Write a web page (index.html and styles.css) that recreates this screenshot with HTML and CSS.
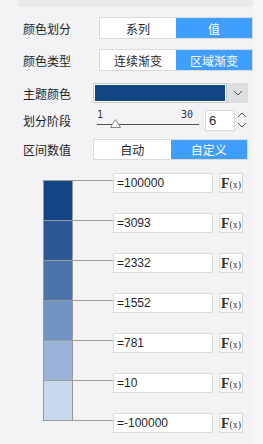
FILE: index.html
```html
<!DOCTYPE html>
<html lang="zh-CN">
<head>
  <meta charset="UTF-8">
  <meta name="viewport" content="width=device-width, initial-scale=1.0">
  <title>颜色设置</title>
  <link rel="stylesheet" href="styles.css">
</head>
<body>
  <div class="panel">
    <div class="section-title">颜色</div>

    <!-- 颜色划分 / 颜色类型 -->
    <div class="row row-wide r1">
      <span class="label">颜色划分</span>
      <div class="seg">
        <span class="seg-item">系列</span>
        <span class="seg-item active">值</span>
      </div>
    </div>
    <div class="row row-wide r2">
      <span class="label">颜色类型</span>
      <div class="seg">
        <span class="seg-item">连续渐变</span>
        <span class="seg-item active">区域渐变</span>
      </div>
    </div>

    <!-- 主题颜色 -->
    <div class="row r3">
      <span class="label">主题颜色</span>
      <div class="color-pick">
        <div class="swatch"></div>
        <div class="drop">
          <svg width="10" height="6" viewBox="0 0 10 6"><path d="M1 1 L5 5 L9 1" fill="none" stroke="#555" stroke-width="1"/></svg>
        </div>
      </div>
    </div>

    <!-- 划分阶段 -->
    <div class="row r4">
      <span class="label">划分阶段</span>
      <div class="slider">
        <div class="slider-nums"><span>1</span><span>30</span></div>
        <div class="slider-track">
          <svg class="thumb" width="11" height="9" viewBox="0 0 11 9"><path d="M5.5 0.5 L10.5 8.5 L0.5 8.5 Z" fill="#fff" stroke="#888" stroke-width="1"/></svg>
        </div>
      </div>
      <div class="num">6</div>
      <div class="spin">
        <svg width="10" height="6" viewBox="0 0 10 6"><path d="M1 5 L5 1 L9 5" fill="none" stroke="#555" stroke-width="1"/></svg>
        <svg width="10" height="6" viewBox="0 0 10 6"><path d="M1 1 L5 5 L9 1" fill="none" stroke="#555" stroke-width="1"/></svg>
      </div>
    </div>

    <!-- 区间数值 -->
    <div class="row r5">
      <span class="label">区间数值</span>
      <div class="seg">
        <span class="seg-item">自动</span>
        <span class="seg-item active">自定义</span>
      </div>
    </div>

    <!-- legend -->
    <div class="legend">
      <div class="bar">
        <div class="cell c1"></div>
        <div class="cell c2"></div>
        <div class="cell c3"></div>
        <div class="cell c4"></div>
        <div class="cell c5"></div>
        <div class="cell c6"></div>
      </div>
      <div class="stops">
        <div class="stop"><i class="link"></i><div class="val">=100000</div><div class="fx">F<small>(x)</small></div></div>
        <div class="stop"><i class="link"></i><div class="val">=3093</div><div class="fx">F<small>(x)</small></div></div>
        <div class="stop"><i class="link"></i><div class="val">=2332</div><div class="fx">F<small>(x)</small></div></div>
        <div class="stop"><i class="link"></i><div class="val">=1552</div><div class="fx">F<small>(x)</small></div></div>
        <div class="stop"><i class="link"></i><div class="val">=781</div><div class="fx">F<small>(x)</small></div></div>
        <div class="stop"><i class="link"></i><div class="val">=10</div><div class="fx">F<small>(x)</small></div></div>
        <div class="stop"><i class="link"></i><div class="val">=-100000</div><div class="fx">F<small>(x)</small></div></div>
      </div>
    </div>

    <div class="row row-wide r6">
      <span class="label"></span>
      <div class="seg">
        <span class="seg-item"></span>
        <span class="seg-item active"></span>
      </div>
    </div>
  </div>
</body>
</html>
```

FILE: styles.css
```css
/* Global styles */
body {
  margin: 0;
  background-color: #f7f7f9;
  font-family: "Liberation Sans", "Noto Sans CJK SC", sans-serif;
  font-size: 12px;
  color: #1f1f1f;
  overflow: hidden;
}

.panel {
  width: 253px;
  height: 444px;
  background-color: #f3f3f5;
  overflow: hidden;
}

/* cut-off section header */
.section-title {
  margin: -17px 0 0 18px;
  height: 24px;
  line-height: 24px;
  padding-left: 5px;
  background-color: #e9e9eb;
  color: #333;
}

/* form rows */
.row {
  display: flex;
  align-items: center;
}

.label {
  width: 70px;
  padding-left: 23px;
  flex-shrink: 0;
}

.row-wide .label {
  width: 76px;
}

.r1 { margin-top: 10px; height: 22px; }
.r2 { margin-top: 10px; height: 22px; }
.r3 { margin-top: 12px; height: 20px; }
.r4 { margin-top: 6px; height: 22px; }
.r5 { margin-top: 8px; height: 21px; }
.r6 { margin-top: 11px; height: 22px; align-items: flex-start; }

/* segmented switch */
.seg {
  display: flex;
  width: 155px;
  height: 100%;
  box-sizing: border-box;
  border: 1px solid #d9d9dc;
  background-color: #fff;
}

.seg-item {
  flex: 1;
  display: flex;
  align-items: center;
  justify-content: center;
}

.seg-item.active {
  background-color: #409eff;
  color: #fff;
}

/* theme colour */
.color-pick {
  display: flex;
  height: 100%;
}

.swatch {
  width: 134px;
  box-sizing: border-box;
  border: 1px solid #c8c8c8;
  background-color: #124583;
  box-shadow: inset 0 0 0 1px #fff;
}

.drop {
  width: 21px;
  background-color: #dedee0;
  display: flex;
  align-items: center;
  justify-content: center;
}

/* slider */
.slider {
  width: 102px;
  margin-left: 4px;
  height: 100%;
  position: relative;
}

.slider-nums {
  display: flex;
  justify-content: space-between;
  padding-right: 6px;
  font-family: "DejaVu Sans Mono", monospace;
  font-size: 10px;
  line-height: 12px;
  color: #333;
}

.slider-track {
  margin-top: 3px;
  height: 1px;
  background-color: #555;
  position: relative;
}

.thumb {
  position: absolute;
  left: 13px;
  top: -5px;
}

.num {
  width: 30px;
  height: 21px;
  margin-left: 6px;
  box-sizing: border-box;
  border: 1px solid #d9d9dc;
  background-color: #fff;
  padding-left: 3px;
  font-size: 13px;
  line-height: 19px;
}

.spin {
  width: 13px;
  height: 21px;
  display: flex;
  flex-direction: column;
  justify-content: space-around;
  align-items: center;
}

/* legend */
.legend {
  display: flex;
  align-items: flex-start;
  margin-top: 13px;
  padding-left: 43px;
}

.bar {
  margin-top: 7px;
  width: 30px;
  box-sizing: border-box;
  border: 1px solid #9a9a9a;
  border-top: none;
}

.cell {
  height: 39px;
  border-top: 1px solid #9a9a9a;
}

.c1 { background-color: #124583; }
.c2 { background-color: #2b5894; }
.c3 { background-color: #4a74aa; }
.c4 { background-color: #6f94c2; }
.c5 { background-color: #99b4d7; }
.c6 { background-color: #c9d9ec; }

.stop {
  display: flex;
  align-items: flex-start;
  height: 40px;
}

.stop:last-child {
  height: 20px;
}

.link {
  width: 40px;
  height: 1px;
  margin-top: 7px;
  background-color: #9a9a9a;
}

.val {
  width: 100px;
  height: 20px;
  box-sizing: border-box;
  border: 1px solid #dadade;
  background-color: #fff;
  padding-left: 3px;
  line-height: 18px;
}

.fx {
  width: 24px;
  height: 20px;
  margin-left: 6px;
  box-sizing: border-box;
  border: 1px solid #dadade;
  background-color: #fff;
  text-align: center;
  font-family: "Liberation Serif", serif;
  font-weight: bold;
  font-size: 14px;
  line-height: 19px;
  color: #333;
}

.fx small {
  font-size: 10px;
  font-weight: normal;
}
```
